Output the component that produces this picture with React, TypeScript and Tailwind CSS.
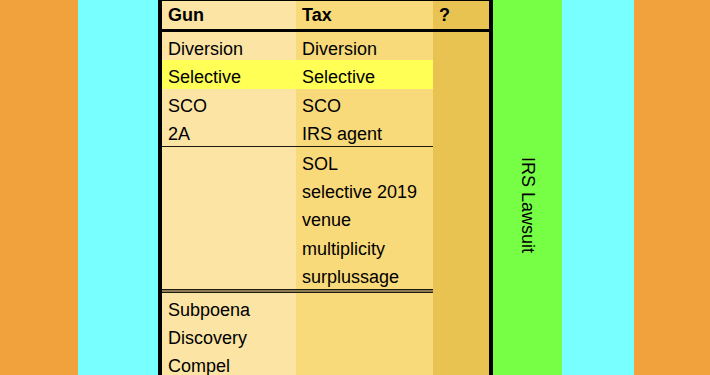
const font = { fontFamily: '"Liberation Sans", Arial, sans-serif' };

type Row = { gun?: string; tax?: string; hl?: boolean };

const top: Row[] = [
  { gun: "Diversion", tax: "Diversion" },
  { gun: "Selective", tax: "Selective", hl: true },
  { gun: "SCO", tax: "SCO" },
  { gun: "2A", tax: "IRS agent" },
];

const mid: Row[] = [
  { tax: "SOL" },
  { tax: "selective 2019" },
  { tax: "venue" },
  { tax: "multiplicity" },
  { tax: "surplussage" },
];

const bottom: Row[] = [{ gun: "Subpoena" }, { gun: "Discovery" }, { gun: "Compel" }];

function Rows({ rows }: { rows: Row[] }) {
  return (
    <>
      {rows.map((r, i) => (
        <div key={i} className="grid grid-cols-[134px_137px] h-[28.4px] text-[18px] text-black">
          <div className={`pl-[6px] pt-[6px] leading-[22.4px] whitespace-nowrap ${r.hl ? "bg-[#ffff55]" : "bg-[#fbe4a4]"}`}>
            {r.gun}
          </div>
          <div className={`pl-[6px] pt-[6px] leading-[22.4px] whitespace-nowrap ${r.hl ? "bg-[#ffff55]" : "bg-[#f9da7a]"}`}>
            {r.tax}
          </div>
        </div>
      ))}
    </>
  );
}

export default function App() {
  return (
    <div className="flex h-[375px] w-[710px] overflow-hidden" style={font}>
      <div className="w-[78px] bg-[#f1a23c]" />
      <div className="w-[80px] bg-[#78ffff]" />

      <div className="flex w-[335px] flex-col border-x-4 border-black">
        <div className="flex h-[32px] border-t border-b-[3px] border-black text-[18px] font-bold leading-[28px]">
          <div className="w-[134px] bg-[#fbe4a4] pl-[6px]">Gun</div>
          <div className="w-[137px] bg-[#f9da7a] pl-[6px]">Tax</div>
          <div className="flex-1 bg-[#e9c352] pl-[6px]">?</div>
        </div>
        <div className="flex flex-1">
          <div className="flex w-[271px] flex-col bg-[#fbe4a4]">
            <Rows rows={top} />
            <div className="h-px bg-[#1e1a12]" />
            <Rows rows={mid} />
            <div className="h-[4px] border-y border-[#1e1a12] bg-[#8c7d55]" />
            <Rows rows={bottom} />
          </div>
          <div className="flex-1 bg-[#e9c352]" />
        </div>
      </div>

      <div className="flex w-[69px] flex-col items-center bg-[#76ff45] pt-[157px]">
        <span className="text-[18px] leading-[20px] text-black [writing-mode:vertical-rl]">IRS Lawsuit</span>
      </div>
      <div className="w-[72px] bg-[#78ffff]" />
      <div className="flex-1 bg-[#f1a23c]" />
    </div>
  );
}
